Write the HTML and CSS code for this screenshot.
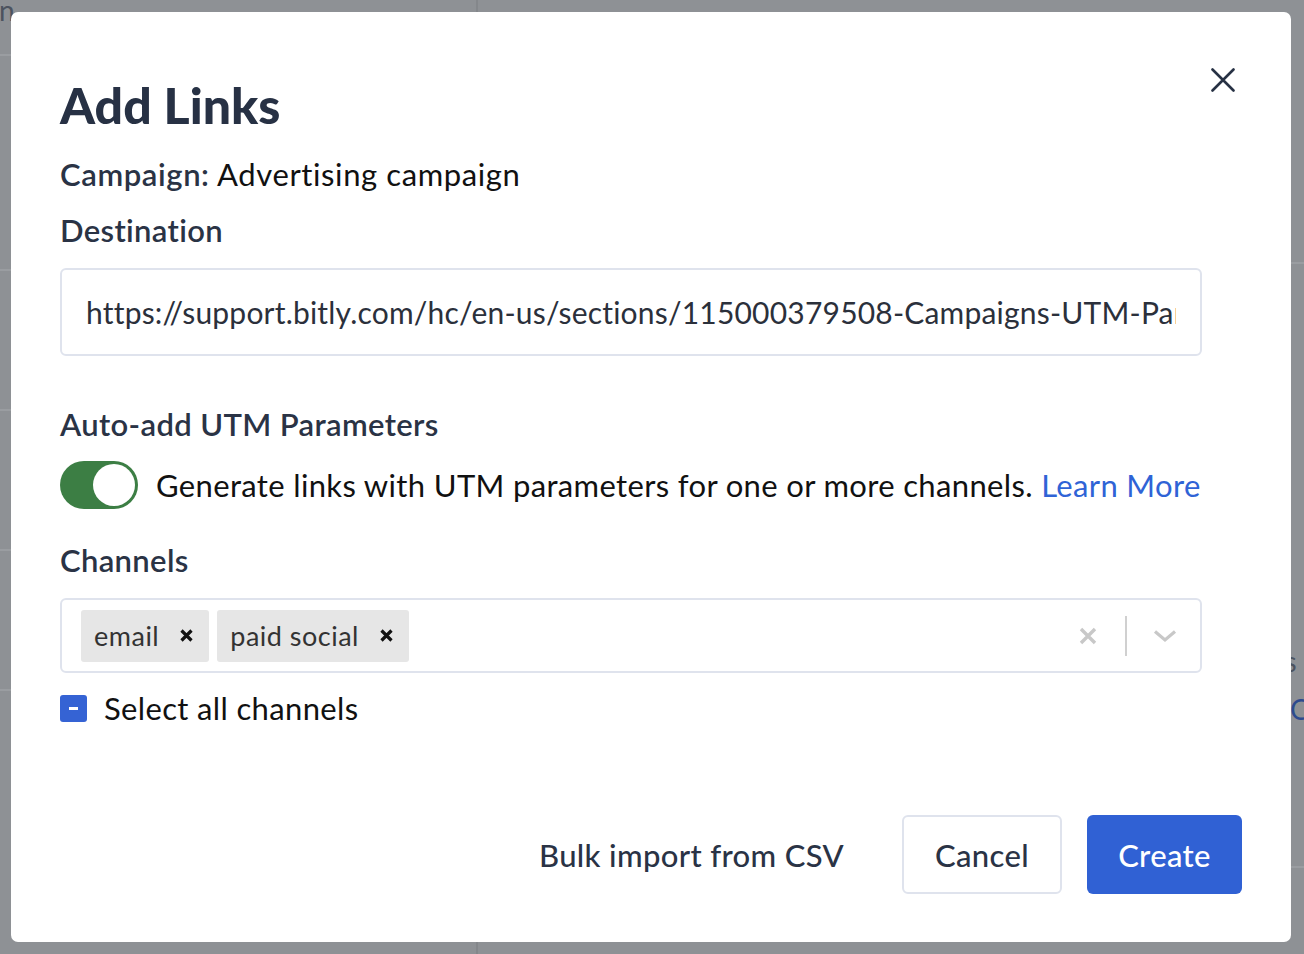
FILE: index.html
```html
<!DOCTYPE html>
<html lang="en">
<head>
    <meta charset="UTF-8">
    <title>Add Links</title>
    <link rel="stylesheet" href="styles.css">
</head>
<body>
    <!-- page behind the overlay -->
    <div class="backdrop">
        <div class="side-list">
            <div class="side-head">Campaign</div>
            <div class="side-item first"><div class="item-title">Summer</div><div class="item-sub">Campaign</div></div>
            <div class="side-item"><div class="item-title">Bitly data</div><div class="item-sub">Campaign</div></div>
            <div class="side-item"><div class="item-title">Organic</div><div class="item-sub">Campaign</div></div>
            <div class="side-item"><div class="item-title">Blog</div><div class="item-sub">Campaign</div></div>
        </div>
        <div class="main-area">
            <div class="right-rule top"></div>
            <div class="right-text">Clicks</div>
            <div class="right-link">Create</div>
            <div class="right-rule bottom"></div>
        </div>
    </div>

    <div class="modal">
        <button class="close-btn" aria-label="Close">
            <svg width="24" height="24" viewBox="0 0 24 24"><path d="M1.5 1.5 L22.5 22.5 M22.5 1.5 L1.5 22.5" stroke="#273144" stroke-width="2.6" stroke-linecap="round"/></svg>
        </button>

        <h1 class="title">Add Links</h1>

        <div class="form">
            <div class="campaign"><span class="label-part">Campaign:</span> Advertising campaign</div>

            <div class="label">Destination</div>
            <div class="text-input"><div class="input-value">https://support.bitly.com/hc/en-us/sections/115000379508-Campaigns-UTM-Parameters</div></div>

            <div class="label utm-label">Auto-add UTM Parameters</div>
            <div class="toggle-row">
                <div class="toggle"><div class="knob"></div></div>
                <div class="toggle-text">Generate links with UTM parameters for one or more channels. <a class="learn" href="#">Learn More</a></div>
            </div>

            <div class="label channels-label">Channels</div>
            <div class="select">
                <div class="tags">
                    <div class="tag">email <span class="tag-x"><svg width="13" height="13" viewBox="0 0 13 13"><path d="M1.5 1.5 L11.5 11.5 M11.5 1.5 L1.5 11.5" stroke="#111" stroke-width="3.2"/></svg></span></div>
                    <div class="tag">paid social <span class="tag-x"><svg width="13" height="13" viewBox="0 0 13 13"><path d="M1.5 1.5 L11.5 11.5 M11.5 1.5 L1.5 11.5" stroke="#111" stroke-width="3.2"/></svg></span></div>
                </div>
                <div class="indicators">
                    <svg class="clear" width="18" height="18" viewBox="0 0 18 18"><path d="M2 2 L16 16 M16 2 L2 16" stroke="#c8c8c8" stroke-width="3.4"/></svg>
                    <span class="sep"></span>
                    <svg class="chevron" width="24" height="14" viewBox="0 0 24 14"><path d="M2 2.5 L12 11 L22 2.5" fill="none" stroke="#c8c8c8" stroke-width="3.2"/></svg>
                </div>
            </div>

            <div class="check-row">
                <span class="checkbox"><span class="dash"></span></span>
                <span>Select all channels</span>
            </div>
        </div>

        <div class="footer">
            <button class="btn btn-text">Bulk import from CSV</button>
            <button class="btn btn-outline">Cancel</button>
            <button class="btn btn-primary">Create</button>
        </div>
    </div>
</body>
</html>
```

FILE: styles.css
```css
body {
    margin: 0;
    padding: 0;
    font-family: "Lato", "Liberation Sans", sans-serif;
    letter-spacing: 0.35px;
    background-color: #8e9195;
    width: 1304px;
    height: 954px;
    overflow: hidden;
}

/* backdrop page */
.backdrop {
    display: flex;
    height: 954px;
}

.side-list {
    width: 606px;
    margin-left: -130px;
    border-right: 2px solid #84878b;
    display: flex;
    flex-direction: column;
    flex-shrink: 0;
}

.side-head {
    height: 54px;
    border-bottom: 2px solid #9a9da1;
    font-size: 28px;
    line-height: 20px;
    color: #4c535f;
    padding-left: 20px;
    white-space: nowrap;
}

.side-item {
    height: 140px;
    border-bottom: 2px solid #9a9da1;
    padding-top: 32px;
    box-sizing: border-box;
    color: #4c535f;
}

.side-item.first {
    height: 215px;
    padding-top: 55px;
}

.item-title {
    font-size: 28px;
    line-height: 40px;
}

.item-sub {
    font-size: 22px;
    line-height: 36px;
    color: #5b606a;
}

.main-area {
    flex: 1;
    display: flex;
    flex-direction: column;
    min-width: 0;
}

.right-rule {
    height: 2px;
    background-color: #9a9da1;
}

.right-rule.top {
    margin-top: 262px;
}

.right-text {
    margin-top: 380px;
    font-size: 28px;
    color: #4c535f;
    text-align: right;
    padding-right: 7px;
}

.right-link {
    font-size: 28px;
    color: #2d4b8f;
    padding-left: 812px;
    margin-top: 14px;
    white-space: nowrap;
}

.right-rule.bottom {
    margin-top: 140px;
}

/* modal */
.modal {
    position: fixed;
    left: 11px;
    top: 12px;
    width: 1280px;
    height: 930px;
    box-sizing: border-box;
    padding: 53px 49px 0 49px;
    background-color: #fff;
    border-radius: 7px;
}

.close-btn {
    position: absolute;
    top: 56px;
    right: 56px;
    width: 24px;
    height: 24px;
    padding: 0;
    border: none;
    background: none;
    cursor: pointer;
}

.title {
    margin: 0;
    font-size: 50px;
    line-height: 80px;
    font-weight: 900;
    letter-spacing: 0;
    color: #273144;
}

.form {
    margin-right: 40px;
    display: flex;
    flex-direction: column;
}

.campaign {
    font-size: 31px;
    line-height: 40px;
    margin-top: 9px;
    letter-spacing: 0.6px;
    color: #111;
}

.label-part, .label {
    font-weight: 600;
    color: #2a3345;
}

.label {
    font-size: 31px;
    line-height: 40px;
    margin-top: 16px;
}

.text-input {
    margin-top: 18px;
    height: 88px;
    box-sizing: border-box;
    border: 2px solid #dfe3ed;
    border-radius: 6px;
    padding: 0 24px;
    display: flex;
    align-items: center;
}

.input-value {
    font-size: 30px;
    letter-spacing: 0.2px;
    line-height: 40px;
    color: #2b303b;
    white-space: nowrap;
    overflow: hidden;
}

.utm-label {
    margin-top: 48px;
}

.toggle-row {
    display: flex;
    align-items: center;
    margin-top: 17px;
    height: 48px;
}

.toggle {
    width: 78px;
    height: 48px;
    border-radius: 24px;
    background-color: #3c7e44;
    box-sizing: border-box;
    padding: 3px;
    display: flex;
    justify-content: flex-end;
    flex-shrink: 0;
}

.knob {
    width: 42px;
    height: 42px;
    border-radius: 50%;
    background-color: #fff;
}

.toggle-text {
    margin-left: 18px;
    font-size: 31px;
    color: #111;
    white-space: nowrap;
}

.learn {
    color: #2f63d6;
    text-decoration: none;
}

.channels-label {
    margin-top: 31px;
}

.select {
    margin-top: 18px;
    height: 75px;
    box-sizing: border-box;
    border: 2px solid #dfe3ed;
    border-radius: 6px;
    display: flex;
    align-items: center;
    justify-content: space-between;
    padding: 0 23px 0 19px;
}

.tags {
    display: flex;
    gap: 8px;
}

.tag {
    height: 52px;
    background-color: #e6e6e6;
    border-radius: 3px;
    display: flex;
    align-items: center;
    padding: 0 16px 0 13px;
    font-size: 27px;
    letter-spacing: 0.5px;
    color: #333;
}

.tag-x {
    margin-left: 21px;
    display: flex;
}

.indicators {
    display: flex;
    align-items: center;
}

.sep {
    width: 2px;
    height: 40px;
    background-color: #d0d0d0;
    margin: 0 26px 0 28px;
}

.check-row {
    display: flex;
    align-items: center;
    margin-top: 15px;
    height: 40px;
    font-size: 31px;
    color: #111;
}

.checkbox {
    width: 27px;
    height: 27px;
    border-radius: 3px;
    background-color: #3563d4;
    display: flex;
    align-items: center;
    justify-content: center;
    margin-right: 17px;
}

.dash {
    width: 9px;
    height: 3px;
    background-color: #fff;
}

.footer {
    display: flex;
    justify-content: flex-end;
    align-items: center;
    margin-top: 87px;
}

.btn {
    height: 79px;
    font-family: inherit;
    font-size: 31px;
    font-weight: 500;
    letter-spacing: 0.35px;
    border-radius: 6px;
    cursor: pointer;
    box-sizing: border-box;
}

.btn-text {
    background: none;
    border: none;
    color: #2a3345;
    padding: 0 30px;
    margin-right: 28px;
}

.btn-outline {
    width: 160px;
    background-color: #fff;
    border: 2px solid #dfe3ed;
    color: #2a3345;
    margin-right: 25px;
}

.btn-primary {
    width: 155px;
    background-color: #3061d4;
    border: none;
    color: #fff;
}
```
